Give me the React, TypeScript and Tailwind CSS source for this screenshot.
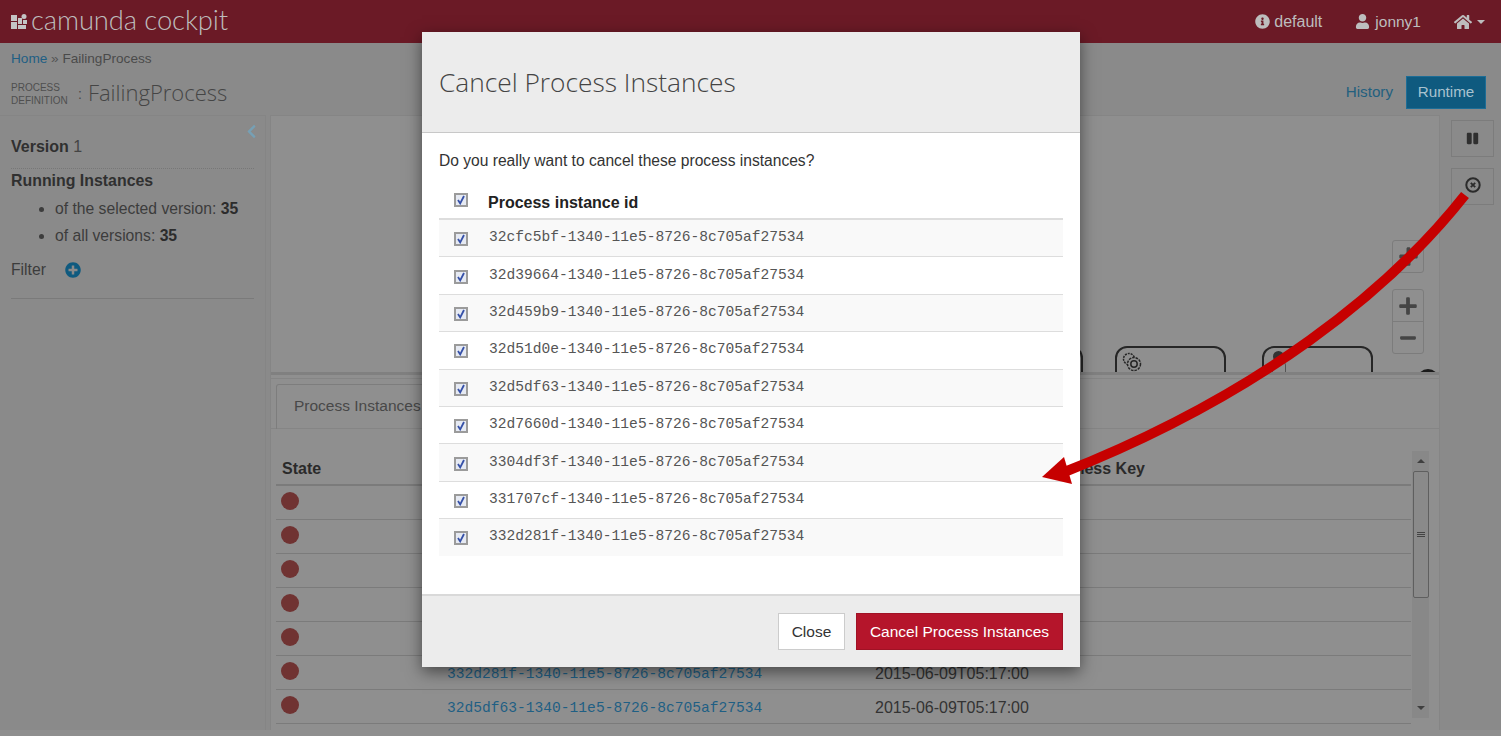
import { FaInfoCircle, FaUser, FaHome, FaPlusCircle, FaChevronLeft, FaPause, FaPlus, FaMinus } from 'react-icons/fa';

const modalIds = [
  '32cfc5bf-1340-11e5-8726-8c705af27534',
  '32d39664-1340-11e5-8726-8c705af27534',
  '32d459b9-1340-11e5-8726-8c705af27534',
  '32d51d0e-1340-11e5-8726-8c705af27534',
  '32d5df63-1340-11e5-8726-8c705af27534',
  '32d7660d-1340-11e5-8726-8c705af27534',
  '3304df3f-1340-11e5-8726-8c705af27534',
  '331707cf-1340-11e5-8726-8c705af27534',
  '332d281f-1340-11e5-8726-8c705af27534',
];

// first five rows sit behind the modal, their text can't be seen
const tableRows = [
  { key: 1 },
  { key: 2 },
  { key: 3 },
  { key: 4 },
  { key: 5 },
  { key: 6, id: '332d281f-1340-11e5-8726-8c705af27534', start: '2015-06-09T05:17:00' },
  { key: 7, id: '32d5df63-1340-11e5-8726-8c705af27534', start: '2015-06-09T05:17:00' },
];

const Check = () => (
  <span className="w-[14px] h-[14px] border-2 border-[#9b9b9b] bg-[#e6eaf3] flex items-center justify-center">
    <svg width="10" height="10" viewBox="0 0 10 10">
      <path d="M2 5 L4.2 8.4 L8 1" fill="none" stroke="#3550a8" strokeWidth="1.8" />
    </svg>
  </span>
);

const Logo = () => (
  <svg width="16" height="16" viewBox="0 0 16 16" className="shrink-0 mt-[1px]">
    <path d="M0 1h6v6H0zM0 8h6v7H0zM7 4h4v6H7zM7 11h8v4H7zM12 6h4v4h-4z" fill="#c4c4c4" />
    <circle cx="13" cy="2.5" r="2.5" fill="#c4c4c4" />
  </svg>
);

export default function App() {
  return (
    <div className="relative w-[1501px] h-[736px] overflow-hidden bg-[#8a8a8a] font-['Liberation_Sans',Arial,sans-serif] text-[#303030]">
      {/* Navbar */}
      <header className="h-[43px] bg-[#6b1a26] flex items-center justify-between pl-[11px] pr-[16px] text-[#bdbdbd]">
        <div className="flex items-center gap-[4px]">
          <Logo />
          <span className="font-['Lato',sans-serif] font-light text-[27.4px] leading-none tracking-[-0.1px] -mt-[3px]">camunda cockpit</span>
        </div>
        <div className="flex items-center">
          <FaInfoCircle className="text-[15px] mr-[4px]" />
          <span className="text-[16px]">default</span>
          <FaUser className="text-[15px] ml-[33px] mr-[5px]" />
          <span className="text-[15.5px]">jonny1</span>
          <FaHome className="text-[18px] ml-[33px] mr-[5px]" />
          <span className="w-0 h-0 border-x-[4px] border-x-transparent border-t-[4px] border-t-[#bdbdbd]" />
        </div>
      </header>

      {/* Breadcrumb and title */}
      <div className="h-[72px] pl-[11px] pr-[15px] pt-[8px]">
        <div className="text-[13.6px] leading-[16px] text-[#4a4a4a]">
          <span className="text-[#1f5f84]">Home</span> <span className="text-[#555]">»</span> FailingProcess
        </div>
        <div className="flex items-center justify-between mt-[12px]">
          <div className="flex items-center">
            <div className="text-[10px] leading-[13px] text-[#4f4f4f] w-[67px] uppercase">Process<br />Definition</div>
            <span className="text-[#4a4a4a] text-[14px] mr-[6px]">:</span>
            <span className="text-[22px] leading-[28px] -mt-[4px] text-[#454545] font-['Open_Sans',sans-serif] font-light">FailingProcess</span>
          </div>
          <div className="flex items-center text-[15.2px] -mt-[3px]">
            <span className="text-[#23607f] mr-[13px]">History</span>
            <span className="w-[80px] h-[33px] bg-[#0f5a7f] border border-[#1d6d96] text-[#a8c2cf] flex items-center justify-center">Runtime</span>
          </div>
        </div>
      </div>

      <div className="flex h-[615px]">
        {/* Sidebar */}
        <aside className="w-[266px] shrink-0 border-r border-t border-[#858585] px-[11px] relative">
          <FaChevronLeft className="absolute right-[6px] top-[8px] text-[15px] text-[#76a0b5]" />
          <div className="h-[53px] pt-[22px] border-b border-dotted border-[#777] text-[16px] leading-[18px]">
            <b>Version</b> <span className="text-[#444]">1</span>
          </div>
          <div className="font-bold text-[15.9px] leading-[18px] mt-[3px]">Running Instances</div>
          <ul className="list-disc pl-[44px] text-[15.7px] text-[#3c3c3c] leading-[18px] mt-[10px] flex flex-col gap-[9px]">
            <li>of the selected version: <b className="text-[#2c2c2c]">35</b></li>
            <li>of all versions: <b className="text-[#2c2c2c]">35</b></li>
          </ul>
          <div className="flex items-center h-[20px] mt-[15px] text-[15.7px] text-[#3c3c3c]">
            <span>Filter</span>
            <FaPlusCircle className="text-[#0f5a7f] ml-[19px] text-[16px]" />
          </div>
          <div className="border-b border-[#7a7a7a] mt-[18px]" />
        </aside>

        {/* Main */}
        <main className="ml-[4px] w-[1170px] shrink-0 bg-[#8f8f8f] border-t border-x border-[#858585] flex flex-col">
          {/* Diagram */}
          <div className="relative h-[259px] border-b-[3px] border-[#808080] overflow-hidden shrink-0">
            <div className="absolute left-[844px] top-[230px] w-[111px] h-[40px] rounded-[12px] border-2 border-[#262626]">
              <svg width="24" height="24" viewBox="0 0 24 24" className="ml-[3px] mt-[2px]" fill="none" stroke="#262626" strokeWidth="1.5">
                <circle cx="9" cy="9" r="5.5" strokeDasharray="2 1" />
                <circle cx="14" cy="14" r="6.5" strokeDasharray="2.5 1" fill="#8f8f8f" />
                <circle cx="14" cy="14" r="3.2" />
              </svg>
            </div>
            <div className="absolute left-[991px] top-[230px] w-[111px] h-[40px] rounded-[12px] border-2 border-[#262626]">
              <div className="ml-[9px] mt-[3px] w-[11px] h-[11px] rounded-full bg-[#333]" />
              <div className="ml-[8px] -mt-px w-[14px] h-[14px] rounded-t-[4px] border border-[#555]" />
            </div>
            <div className="absolute left-[780px] top-[230px] w-[32px] h-[40px] rounded-r-[12px] border-2 border-l-0 border-[#262626]" />
            <div className="absolute left-[1146px] top-[253px] w-[22px] h-[22px] rounded-full bg-[#1a1a1a]" />
            <button className="absolute left-[1121px] top-[124px] w-[32px] h-[33px] border border-[#7c7c7c] rounded-[3px] flex items-center justify-center text-[#454545] text-[21px]">
              <FaPlus />
            </button>
            <div className="absolute left-[1121px] top-[173px] w-[32px] h-[65px] border border-[#7c7c7c] rounded-[3px] flex flex-col text-[#454545]">
              <span className="flex-1 flex items-center justify-center border-b border-[#7c7c7c] text-[20px]"><FaPlus /></span>
              <span className="flex-1 flex items-center justify-center text-[18px]"><FaMinus /></span>
            </div>
          </div>

          {/* Tabs */}
          <div className="h-[51px] shrink-0 mt-[3px] border-t border-b border-[#858585] pl-[5px] pt-[5px]">
            <div className="w-[200px] h-[45px] border border-[#7d7d7d] border-b-0 rounded-t-[3px] pl-[17px] pt-[9px] text-[15.5px] text-[#484848]">Process Instances</div>
          </div>

          {/* Table */}
          <div className="flex flex-1 pl-[5px] pt-[21px] min-h-0">
            <div className="w-[1135px] shrink-0">
              <div className="flex items-center h-[36px] pt-[4px] border-b-2 border-[#7b7b7b] text-[16px] font-bold text-[#2a2a2a]">
                <span className="w-[764px] pl-[6px]">State</span>
                <span>Business Key</span>
              </div>
              {tableRows.map(row => (
                <div key={row.key} className="flex items-center h-[34px] border-b border-[#7b7b7b]">
                  <span className="w-[171px] pl-[5px]">
                    <span className="block w-[18px] h-[18px] rounded-full bg-[#703332] -mt-[4px]" />
                  </span>
                  <span className="w-[428px] pt-[5px] font-['Liberation_Mono',monospace] text-[14.6px] text-[#1f5f84]">{row.id}</span>
                  <span className="pt-[2px] text-[16px] text-[#333]">{row.start}</span>
                </div>
              ))}
            </div>
            {/* Scrollbar */}
            <div className="ml-[1px] mt-[1px] w-[17px] h-[267px] bg-[#888888] flex flex-col items-center">
              <span className="h-[20px] flex items-center justify-center">
                <span className="w-0 h-0 border-x-[4px] border-x-transparent border-b-[4px] border-b-[#3f3f3f]" />
              </span>
              <div className="w-[16px] h-[127px] bg-[#8a8a8a] border border-[#5f5f5f] rounded-[2px] flex flex-col items-center justify-center gap-[1px]">
                <span className="w-[8px] h-px bg-[#444]" />
                <span className="w-[8px] h-px bg-[#444]" />
                <span className="w-[8px] h-px bg-[#444]" />
              </div>
              <span className="mt-auto h-[20px] flex items-center justify-center">
                <span className="w-0 h-0 border-x-[4px] border-x-transparent border-t-[4px] border-t-[#3f3f3f]" />
              </span>
            </div>
          </div>
        </main>

        {/* Action rail */}
        <div className="ml-[11px] pt-[5px] flex flex-col gap-[11px]">
          <button className="w-[43px] h-[37px] border border-[#7c7c7c] flex items-center justify-center text-[#2f2f2f] text-[13px]"><FaPause /></button>
          <button className="w-[43px] h-[37px] border border-[#7c7c7c] flex items-start justify-center pt-[8px]">
            <svg width="16" height="16" viewBox="0 0 16 16" fill="none" stroke="#2b2b2b">
              <circle cx="8" cy="8" r="6.7" strokeWidth="2" />
              <path d="M5.8 5.8l4.4 4.4M10.2 5.8l-4.4 4.4" strokeWidth="1.8" />
            </svg>
          </button>
        </div>
      </div>
      <div className="h-[6px] bg-[#8f8f8f]" />

      {/* Modal */}
      <div className="absolute left-[422px] top-[32px] w-[658px] h-[635px] bg-white shadow-[0_5px_15px_rgba(0,0,0,0.5)] flex flex-col">
        <div className="h-[101px] shrink-0 bg-[#ececec] border-b border-[#c8c8c8] pl-[17px] pt-[33px] text-[26.3px] leading-[34px] text-[#444] font-['Open_Sans',sans-serif] font-light">
          Cancel Process Instances
        </div>
        <div className="flex-1 px-[17px] pt-[18px]">
          <p className="text-[15.6px] leading-[20px] text-[#333]">Do you really want to cancel these process instances?</p>
          <div className="relative z-10 flex items-center h-[39px] -mb-px mt-[10px] border-b-2 border-[#ddd]">
            <span className="w-[44px] flex justify-center pt-[1px]"><Check /></span>
            <span className="pl-[5px] pt-[7px] font-bold text-[16px] text-[#222]">Process instance id</span>
          </div>
          {modalIds.map((id, i) => (
            <div key={id} className={`flex items-center h-[37.4px] ${i % 2 === 0 ? 'bg-[#f9f9f9]' : 'bg-white'} ${i > 0 ? 'border-t border-[#ddd]' : ''}`}>
              <span className="w-[44px] flex justify-center pt-[2px]"><Check /></span>
              <span className="pl-[6px] font-['Liberation_Mono',monospace] text-[14.6px] text-[#555]">{id}</span>
            </div>
          ))}
        </div>
        <div className="h-[73px] shrink-0 bg-[#ececec] border-t-2 border-[#d9d9d9] flex items-center justify-end gap-[11px] pr-[17px]">
          <button className="w-[67px] h-[37px] bg-white border border-[#ccc] text-[15.5px] text-[#333]">Close</button>
          <button className="w-[207px] h-[37px] bg-[#b5152b] border border-[#a01225] text-[15.5px] text-white">Cancel Process Instances</button>
        </div>
      </div>

      {/* Annotation arrow */}
      <svg className="absolute left-0 top-0 pointer-events-none" width="1501" height="736" viewBox="0 0 1501 736">
        <path d="M1465 195 C1390 290 1260 395 1062 473" fill="none" stroke="#c60000" strokeWidth="10" />
        <path d="M1042 477 L1064 457 L1072 484 Z" fill="#c60000" />
      </svg>
    </div>
  );
}
